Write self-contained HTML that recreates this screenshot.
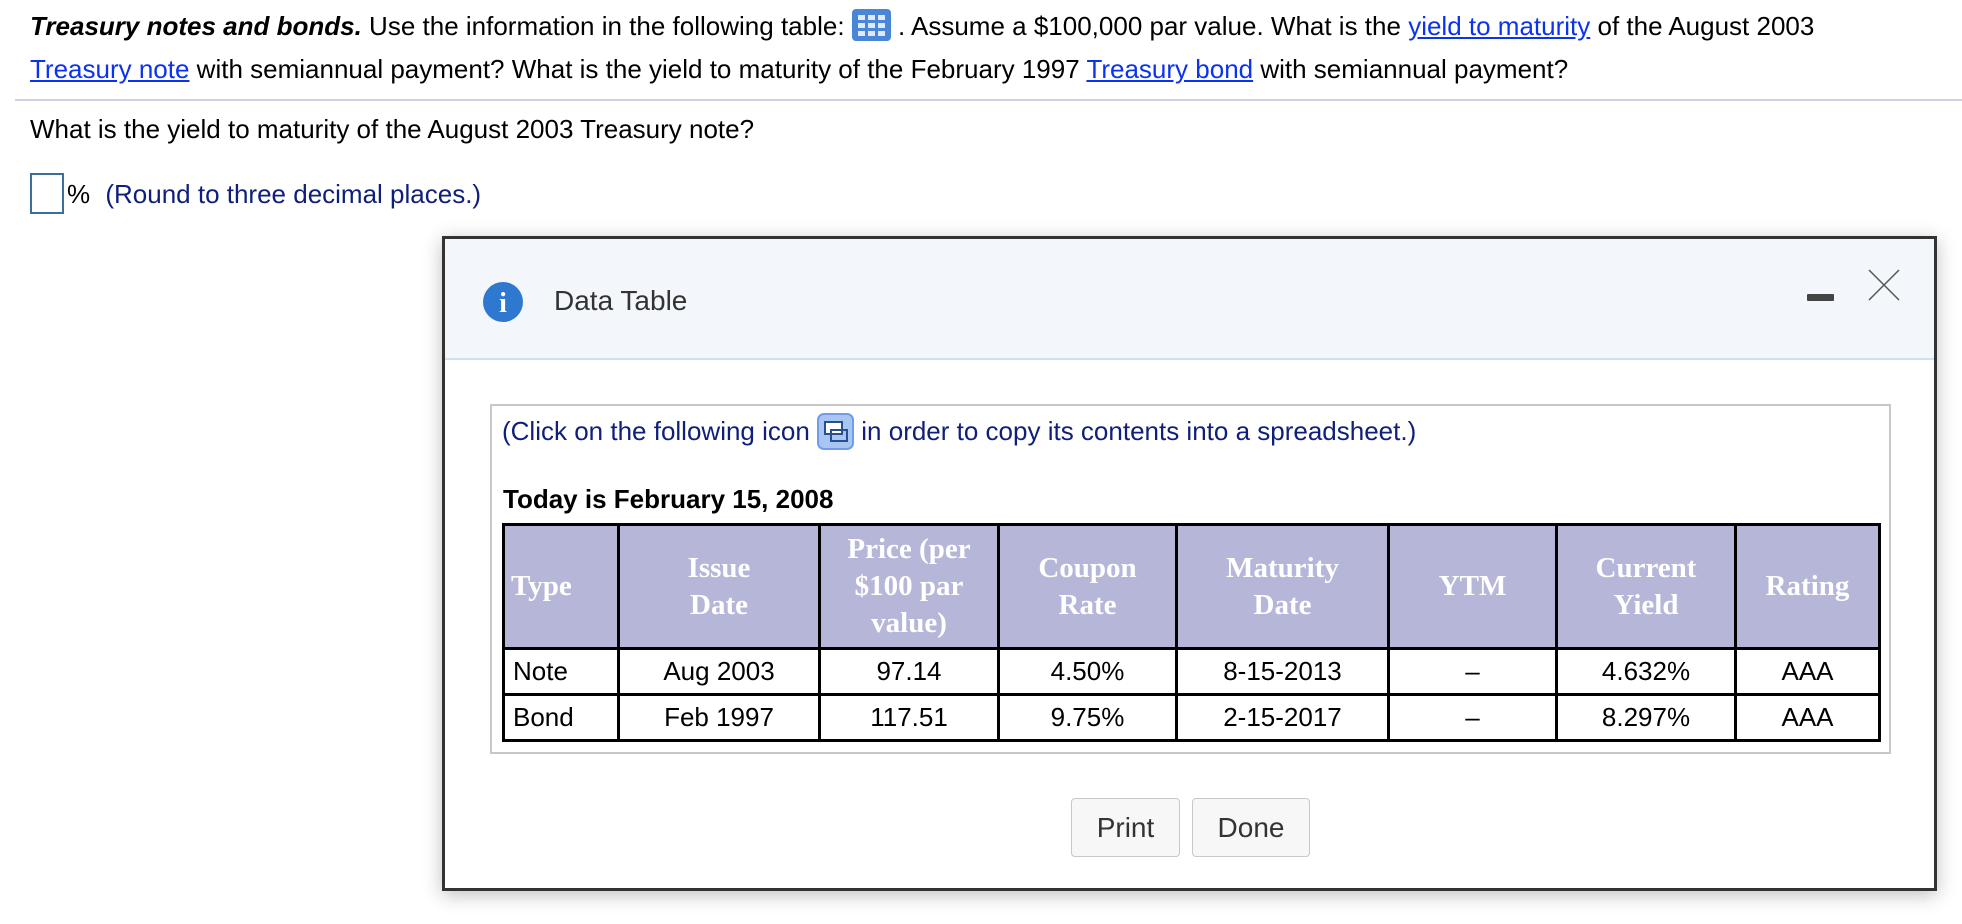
<!DOCTYPE html>
<html><head><meta charset="utf-8"><style>
body{margin:0;width:1962px;height:924px;background:#fff;font-family:"Liberation Sans",Arial,sans-serif;color:#000;position:relative;overflow:hidden}
.a{position:absolute;white-space:nowrap}
a{color:#0b33ee;text-decoration:underline}
.t{font-size:26px;line-height:44px}
table{border-collapse:collapse;position:absolute;left:502px;top:523px;width:1379px}
td,th{border:3px solid #000;text-align:center;padding:0}
th{background:#b6b7d8;color:#fff;font-family:"Liberation Serif",serif;font-weight:bold;font-size:29px;line-height:37px;height:121px}
td{font-size:26px;height:43px}
.btn{position:absolute;top:798px;height:57px;border:1px solid #c8c8c8;border-radius:4px;background:#f7f7f7;font-size:28px;color:#333;text-align:center;line-height:57px}
svg.i{vertical-align:middle}
</style></head><body>
<div class="a t" style="left:30px;top:4px"><b><i>Treasury notes and bonds.</i></b> Use the information in the following table: <svg class="i" width="39" height="32" viewBox="0 0 39 32" style="margin-top:-6px"><rect width="39" height="32" rx="4" fill="#4a86d8"/><g fill="#dfe9fb"><rect x="6" y="6" width="7" height="5"/><rect x="16" y="6" width="7" height="5"/><rect x="26" y="6" width="7" height="5"/><rect x="6" y="14" width="7" height="5"/><rect x="16" y="14" width="7" height="5"/><rect x="26" y="14" width="7" height="5"/><rect x="6" y="22" width="7" height="5"/><rect x="16" y="22" width="7" height="5"/><rect x="26" y="22" width="7" height="5"/></g></svg> . Assume a $100,000 par value. What is the <a>yield to maturity</a> of the August 2003</div>
<div class="a t" style="left:30px;top:47px"><a>Treasury note</a> with semiannual payment? What is the yield to maturity of the February 1997 <a>Treasury bond</a> with semiannual payment?</div>
<div class="a" style="left:15px;top:99px;width:1947px;height:2px;background:#ccd2e2"></div>
<div class="a t" style="left:30px;top:107px">What is the yield to maturity of the August 2003 Treasury note?</div>
<div class="a" style="left:30px;top:173px;width:30px;height:37px;border:2px solid #3a6f9a"></div>
<div class="a t" style="left:67px;top:172px">% <span style="color:#10207a;margin-left:8px">(Round to three decimal places.)</span></div>

<div class="a" style="left:442px;top:236px;width:1489px;height:649px;border:3px solid #333;background:#fff;box-shadow:0 4px 18px rgba(0,0,0,.25)">
<div style="position:absolute;left:0;top:0;right:0;height:119px;background:#f3f6fb;border-bottom:2px solid #cfe0f4"></div>
<svg style="position:absolute;left:37px;top:42px" width="42" height="42" viewBox="0 0 42 42"><circle cx="21" cy="21" r="20" fill="#2f78cf"/><text x="21" y="31" text-anchor="middle" font-family="Liberation Serif,serif" font-weight="bold" font-size="28" fill="#fff">i</text></svg>
<div class="a" style="left:109px;top:45px;font-size:28px;color:#333;line-height:34px">Data Table</div>
<div class="a" style="left:1362px;top:55px;width:27px;height:7px;background:#444;border-radius:1px"></div>
<svg style="position:absolute;left:1423px;top:30px" width="32" height="32" viewBox="0 0 32 32"><path d="M1 1L31 31M31 1L1 31" stroke="#555" stroke-width="1.5"/></svg>
</div>
<div class="a" style="left:490px;top:404px;width:1397px;height:346px;border:2px solid #c8c8c8"></div>
<div class="a" style="left:502px;top:414px;font-size:26px;line-height:34px;color:#10207a">(Click on the following icon <svg class="i" width="37" height="37" viewBox="0 0 37 37" style="margin-top:-4px"><rect x="1" y="1" width="35" height="35" rx="6" fill="#a9c6f3" stroke="#6f9de6" stroke-width="2"/><rect x="8" y="9" width="17" height="12" fill="#fff" stroke="#2a4f8f" stroke-width="2"/><rect x="14" y="17" width="16" height="11" fill="none" stroke="#2a4f8f" stroke-width="2"/></svg> in order to copy its contents into a spreadsheet.)</div>
<div class="a" style="left:503px;top:484px;font-size:26px;font-weight:bold;line-height:30px">Today is February 15, 2008</div>
<table>
<tr><th style="width:106px;text-align:left;padding-left:6px">Type</th><th style="width:198px">Issue<br>Date</th><th style="width:176px">Price (per<br>$100 par<br>value)</th><th style="width:175px">Coupon<br>Rate</th><th style="width:209px">Maturity<br>Date</th><th style="width:165px">YTM</th><th style="width:176px">Current<br>Yield</th><th>Rating</th></tr>
<tr><td style="text-align:left;padding-left:8px">Note</td><td>Aug 2003</td><td>97.14</td><td>4.50%</td><td>8-15-2013</td><td>–</td><td>4.632%</td><td>AAA</td></tr>
<tr><td style="text-align:left;padding-left:8px">Bond</td><td>Feb 1997</td><td>117.51</td><td>9.75%</td><td>2-15-2017</td><td>–</td><td>8.297%</td><td>AAA</td></tr>
</table>
<div class="btn" style="left:1071px;width:107px">Print</div>
<div class="btn" style="left:1192px;width:116px">Done</div>
</body></html>
